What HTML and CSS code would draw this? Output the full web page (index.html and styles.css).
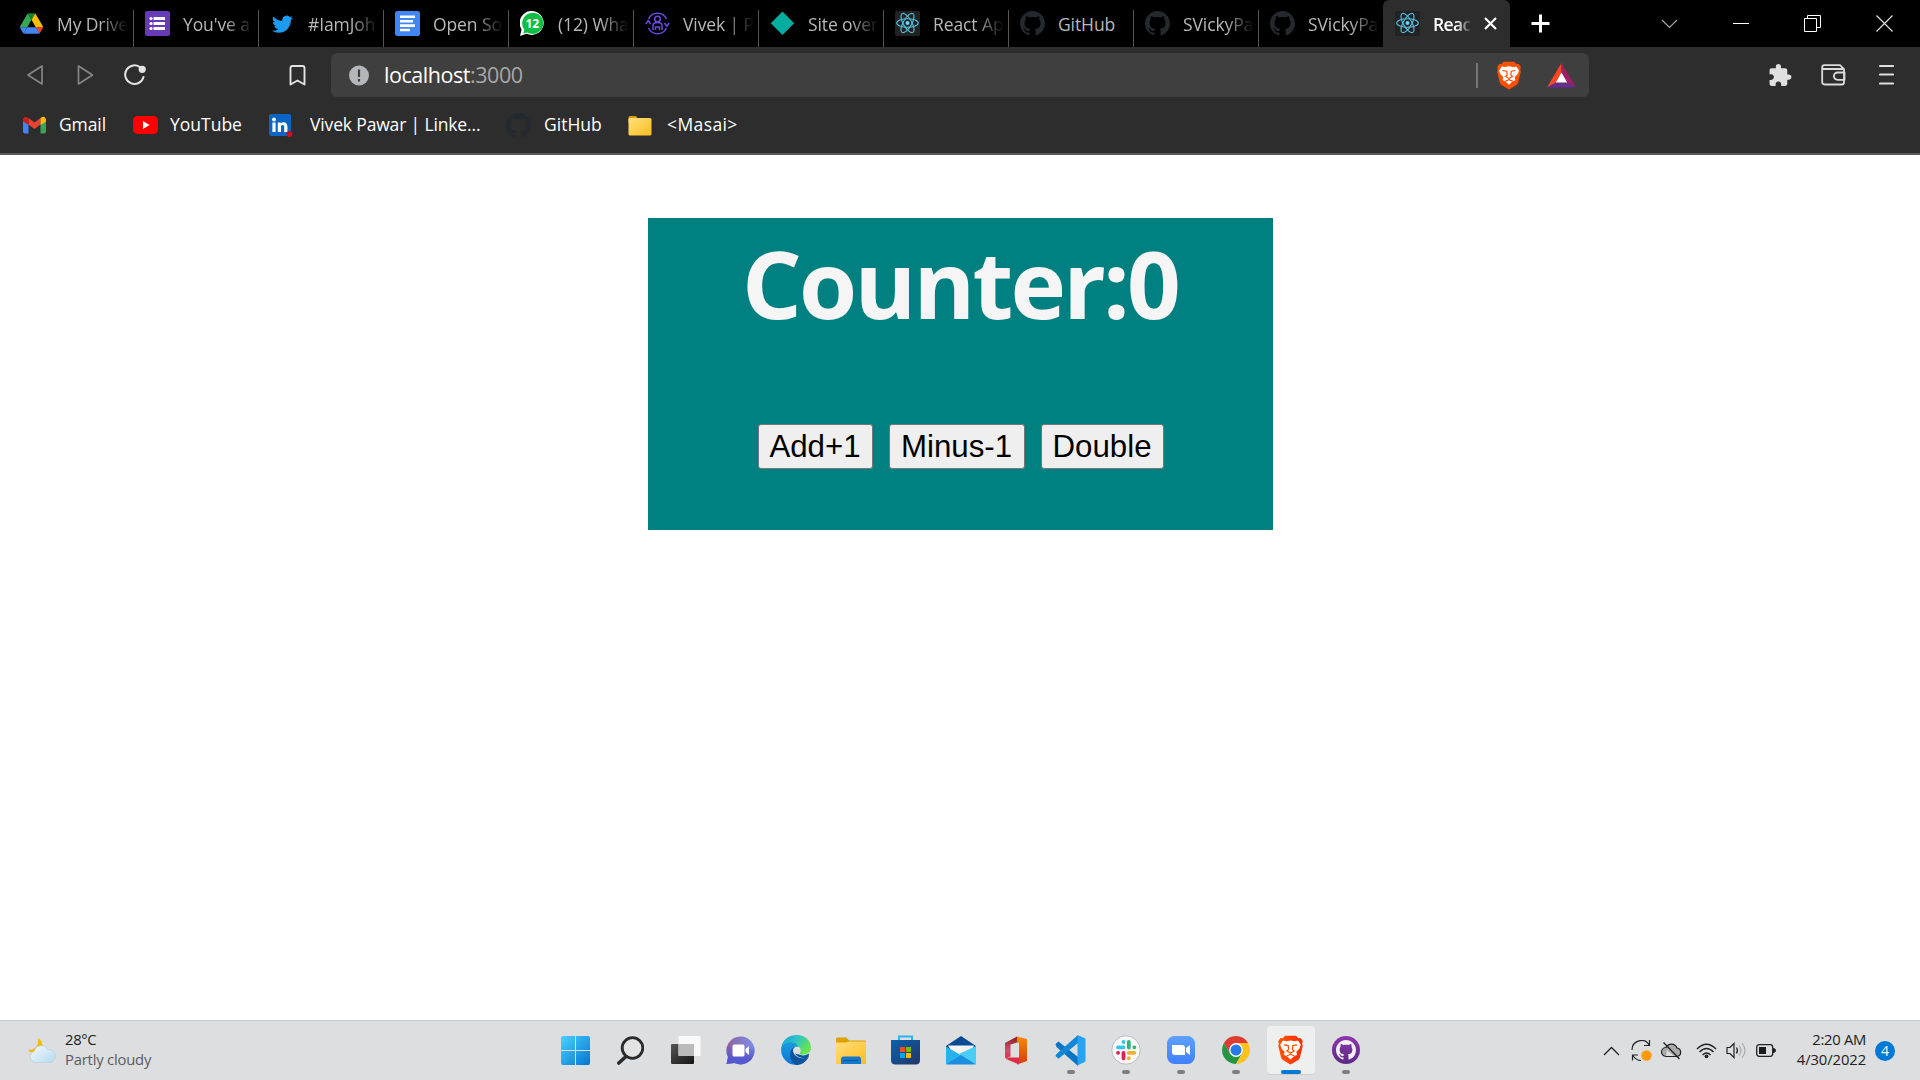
FILE: index.html
```html
<!DOCTYPE html>
<html lang="en">
<head>
<meta charset="utf-8">
<title>React App</title>
<link rel="stylesheet" href="styles.css">
</head>
<body>
<svg class="defs" width="0" height="0" aria-hidden="true">
  <defs>
    <linearGradient id="win" x1="0" y1="0" x2="1" y2="1"><stop offset="0" stop-color="#4fd0fb"/><stop offset="1" stop-color="#0077d3"/></linearGradient>
    <linearGradient id="chat" x1="0" y1="0" x2="1" y2="0"><stop offset="0" stop-color="#8d5f9f"/><stop offset="1" stop-color="#7d91ea"/></linearGradient>
    <linearGradient id="chat2" x1="0" y1="0" x2="0" y2="1"><stop offset=".3" stop-color="#5558cf" stop-opacity="0"/><stop offset=".8" stop-color="#5558cf"/></linearGradient>
    <linearGradient id="edge" x1="0" y1="0" x2="1" y2=".5"><stop offset="0" stop-color="#1a9de0"/><stop offset=".5" stop-color="#2dc3c6"/><stop offset="1" stop-color="#69e64e"/></linearGradient>
    <linearGradient id="edge2" x1="0" y1="0" x2="0" y2="1"><stop offset="0" stop-color="#1b9bdc"/><stop offset="1" stop-color="#0b76d6"/></linearGradient>
    <linearGradient id="fold" x1="0" y1="0" x2="1" y2="1"><stop offset="0" stop-color="#ffe07a"/><stop offset="1" stop-color="#fbbc22"/></linearGradient>
    <linearGradient id="store" x1="0" y1="0" x2="1" y2="1"><stop offset="0" stop-color="#0a62b0"/><stop offset="1" stop-color="#233565"/></linearGradient>
    <linearGradient id="office" x1="0" y1="0" x2="0" y2="1"><stop offset="0" stop-color="#8e1b16"/><stop offset=".6" stop-color="#c9536f"/><stop offset="1" stop-color="#e0304a"/></linearGradient>
    <linearGradient id="office2" x1="0" y1="0" x2="0" y2="1"><stop offset="0" stop-color="#f68b00"/><stop offset="1" stop-color="#d63b12"/></linearGradient>
    <linearGradient id="lion" x1="0" y1="0" x2="1" y2="0"><stop offset="0" stop-color="#ff5500"/><stop offset="1" stop-color="#ff2a00"/></linearGradient>
    <linearGradient id="cloud" x1="0" y1="0" x2="1" y2="1"><stop offset="0" stop-color="#f4f9fc"/><stop offset="1" stop-color="#b4d9f2"/></linearGradient>
    <linearGradient id="task" x1="0" y1="0" x2="1" y2="1"><stop offset="0" stop-color="#555"/><stop offset="1" stop-color="#151515"/></linearGradient>
    <linearGradient id="zoom" x1="0" y1="0" x2="0" y2="1"><stop offset="0" stop-color="#5ea0ff"/><stop offset="1" stop-color="#4080fb"/></linearGradient>
    <linearGradient id="ghd" x1="0" y1="0" x2="0" y2="1"><stop offset="0" stop-color="#8d35ad"/><stop offset="1" stop-color="#5c2a86"/></linearGradient>
  </defs>
  <symbol id="github" viewBox="0 0 16 16"><path d="M8 0C3.58 0 0 3.58 0 8c0 3.54 2.29 6.53 5.47 7.59.4.07.55-.17.55-.38 0-.19-.01-.82-.01-1.49-2.01.37-2.53-.49-2.69-.94-.09-.23-.48-.94-.82-1.13-.28-.15-.68-.52-.01-.53.63-.01 1.08.58 1.23.82.72 1.21 1.87.87 2.33.66.07-.52.28-.87.51-1.07-1.78-.2-3.64-.89-3.64-3.95 0-.87.31-1.59.82-2.15-.08-.2-.36-1.02.08-2.12 0 0 .67-.21 2.2.82.64-.18 1.32-.27 2-.27.68 0 1.36.09 2 .27 1.53-1.04 2.2-.82 2.2-.82.44 1.1.16 1.92.08 2.12.51.56.82 1.27.82 2.15 0 3.07-1.87 3.75-3.65 3.95.29.25.54.73.54 1.48 0 1.07-.01 1.93-.01 2.2 0 .21.15.46.55.38A8.013 8.013 0 0016 8c0-4.42-3.58-8-8-8z"/></symbol>
  <symbol id="react" viewBox="0 0 25 25"><rect width="25" height="25" rx="2" fill="#222"/><g fill="none" stroke="#53c1de" stroke-width="1.1"><ellipse cx="12.5" cy="12" rx="10.8" ry="4.2"/><ellipse cx="12.5" cy="12" rx="10.8" ry="4.2" transform="rotate(60 12.5 12)"/><ellipse cx="12.5" cy="12" rx="10.8" ry="4.2" transform="rotate(120 12.5 12)"/></g><circle cx="12.5" cy="12" r="2" fill="#61dafb"/></symbol>
  <symbol id="brave" viewBox="0 0 26 30"><path d="M7.5.8h11l2.2 2.4 2.3-.2 2.300 3.300-.7 2.200.6 2.500-2.700 11.200c-.3 1.200-.9 2-1.800 2.700L13 29.500l-7.700-4.600c-.9-.7-1.500-1.500-1.800-2.700L.8 11l.6-2.500-.7-2.200L3 3l2.300.2z"/><path d="M5.500 5.600 9 6.300l4-.9 4 .9 3.500-.7 2.800 4.200-1.300 3.600-3.200 3.300.9 3-3.700 2L13 24.600l-3-2.900-3.700-2 .9-3L4 13.400 2.700 9.800z" fill="#fff"/><path d="m6.300 9.800 4.400.8.400 4-1.800 1.400 3.700 2 3.700-2-1.800-1.400.4-4 4.400-.8M13 18v1.800M9 21l4-1.700 4 1.700" fill="none" stroke="#ff4a00" stroke-width="1.200"/></symbol>
</svg>

<header class="browser">
  <div class="tabstrip">
    <div class="tab drive"><span class="fav"><svg width="23" height="21" viewBox="0 0 87.3 78"><path fill="#4285f4" d="m6.600 66.850 3.850 6.650c.8 1.400 1.950 2.500 3.300 3.300l13.750-23.800h-27.500c0 1.550.4 3.100 1.200 4.500z"/><path fill="#34a853" d="m43.650 25-13.750-23.800c-1.350.8-2.500 1.900-3.300 3.300l-25.400 44a9.060 9.060 0 0 0-1.200 4.500h27.500z"/><path fill="#ea4335" d="m73.550 76.800c1.350-.8 2.500-1.900 3.300-3.300l1.600-2.750 7.650-13.250c.8-1.400 1.200-2.950 1.200-4.500h-27.502l5.852 11.500z"/><path fill="#188038" d="m43.650 25 13.750-23.800c-1.350-.8-2.900-1.200-4.500-1.200h-18.500c-1.600 0-3.150.45-4.500 1.200z"/><path fill="#4285f4" d="m59.800 53h-32.300l-13.750 23.800c1.350.8 2.900 1.200 4.500 1.200h50.800c1.600 0 3.150-.45 4.500-1.200z"/><path fill="#fbbc04" d="m73.400 26.500-12.700-22c-.8-1.400-1.950-2.500-3.300-3.300l-13.750 23.800 16.150 28h27.450c0-1.550-.4-3.100-1.200-4.500z"/></svg></span><span class="label">My Drive</span></div>
    <div class="tab"><span class="fav"><svg width="25" height="25"><rect width="25" height="25" rx="2" fill="#673ab7"/><g fill="#fff"><path d="M8.500 6h11.500v3H8.500zM8.500 11h11.500v3H8.500zM8.500 16h11.500v3H8.500z"/><circle cx="6" cy="7.500" r="1.600"/><circle cx="6" cy="12.500" r="1.600"/><circle cx="6" cy="17.500" r="1.600"/></g></svg></span><span class="label">You've a</span></div>
    <div class="tab"><span class="fav tw"><svg width="21" height="21" viewBox="0 0 16 16"><path fill="#1d9bf0" d="M5.026 15c6.038 0 9.341-5.003 9.341-9.334 0-.14 0-.282-.006-.422A6.685 6.685 0 0 0 16 3.542a6.658 6.658 0 0 1-1.889.518 3.301 3.301 0 0 0 1.447-1.817 6.533 6.533 0 0 1-2.087.793A3.286 3.286 0 0 0 7.875 6.030a9.325 9.325 0 0 1-6.767-3.429 3.289 3.289 0 0 0 1.018 4.382A3.323 3.323 0 0 1 .64 6.575v.045a3.288 3.288 0 0 0 2.632 3.218 3.203 3.203 0 0 1-.865.115 3.230 3.230 0 0 1-.614-.057 3.283 3.283 0 0 0 3.067 2.277A6.588 6.588 0 0 1 .78 13.580a6.320 6.320 0 0 1-.78-.045A9.344 9.344 0 0 0 5.026 15z"/></svg></span><span class="label">#IamJoh</span></div>
    <div class="tab"><span class="fav"><svg width="25" height="25"><rect width="25" height="25" rx="2.500" fill="#4285f4"/><path d="M5 4.500h15v2.600H5zM5 8.900h13v2.600H5zM5 13.300h15v2.600H5zM5 17.700h10v2.600H5z" fill="#fff"/></svg></span><span class="label">Open So</span></div>
    <div class="tab"><span class="fav"><svg width="25" height="25"><path d="M12.500 0a12 12 0 1 1-6 22.800L0 25l1.600-6.600A12 12 0 0 1 12.500 0z" fill="#fff"/><path d="M12.700 1.700a10.600 10.600 0 1 1-5.400 19.700l-4 1.200 1-4A10.600 10.600 0 0 1 12.700 1.700z" fill="#0fbf45"/><text x="12.300" y="16.900" text-anchor="middle" class="wa">12</text></svg></span><span class="label">(12) Wha</span></div>
    <div class="tab"><span class="fav"><svg width="25" height="25" fill="none" stroke="#6c47e8" stroke-width="1.500"><circle cx="12.500" cy="8" r="2.800"/><path d="M8 19v-4.500c0-4 9-4 9 0V19M10.500 19v-3h4v3M3.500 8A10 10 0 0 1 21.500 8M21.500 17a10 10 0 0 1-18 0M.8 13 3.200 9.500 5.500 13M19.500 12l2.400 3.300 2.300-3.300"/></svg></span><span class="label">Vivek | P</span></div>
    <div class="tab"><span class="fav"><svg width="25" height="25"><path d="m12.500.5 11.700 11.700-11.700 11.700L.8 12.200z" fill="#05ada0"/></svg></span><span class="label">Site over</span></div>
    <div class="tab"><span class="fav"><svg width="25" height="25"><use href="#react"/></svg></span><span class="label">React Ap</span></div>
    <div class="tab"><span class="fav"><svg width="25" height="25" fill="#24292f"><use href="#github"/></svg></span><span class="label plain">GitHub</span></div>
    <div class="tab"><span class="fav"><svg width="25" height="25" fill="#24292f"><use href="#github"/></svg></span><span class="label">SVickyPa</span></div>
    <div class="tab last"><span class="fav"><svg width="25" height="25" fill="#24292f"><use href="#github"/></svg></span><span class="label">SVickyPa</span></div>
    <div class="tab active"><span class="fav"><svg width="25" height="25"><use href="#react"/></svg></span><span class="label">Reac</span><svg class="tabclose" width="13" height="13"><path d="m1 1 11 11M12 1 1 12" stroke="#fff" stroke-width="2.200"/></svg></div>
    <div class="newtab"><svg width="19" height="19"><path d="M9.500.5v18M.5 9.500h18" stroke="#fff" stroke-width="3"/></svg></div>
    <div class="winctl">
      <span><svg width="17" height="10"><path d="m1 1 7.500 7.500L16 1" fill="none" stroke="#aaa" stroke-width="1.100"/></svg></span>
      <span><svg width="16" height="3"><path d="M0 1.500h16" stroke="#fff"/></svg></span>
      <span><svg width="17" height="17"><path d="M.5 3.500h12v13H.5zM3.500 3.500v-3h13v12h-4" fill="none" stroke="#fff"/></svg></span>
      <span><svg width="17" height="17"><path d="m.5.5 16 16M16.500.5l-16 16" stroke="#ddd" stroke-width="1.200"/></svg></span>
    </div>
  </div>

  <div class="toolbar">
    <div class="nav">
      <span><svg width="18" height="22"><path d="M16 2v18L2 11z" fill="none" stroke="#858585" stroke-width="1.700" stroke-linejoin="round"/></svg></span>
      <span><svg width="18" height="22"><path d="M2.500 2v18l14-9z" fill="none" stroke="#858585" stroke-width="1.700" stroke-linejoin="round"/></svg></span>
      <span><svg width="23" height="22"><path d="M16.700 3.700A9.300 9.300 0 1 0 19.500 13" fill="none" stroke="#e3e3e3" stroke-width="2" stroke-linecap="round"/><circle cx="18.200" cy="5.300" r="3.600" fill="#e3e3e3"/></svg></span>
    </div>
    <span class="mark"><svg width="17" height="21"><path d="M1.500 3q0-2 2-2h10q2 0 2 2v16.500l-7-4-7 4z" fill="none" stroke="#e3e3e3" stroke-width="1.900" stroke-linejoin="round"/></svg></span>
    <div class="address">
      <svg width="20" height="21"><circle cx="10" cy="10.500" r="10" fill="#b4b6ba"/><path d="M10 4.500v7.500M10 14v2.500" stroke="#3f3f3f" stroke-width="2.200"/></svg>
      <span class="url">localhost<span class="port">:3000</span></span>
      <i class="divider"></i>
      <svg class="shield" width="26" height="29" fill="#ff5000"><use href="#brave"/></svg>
      <svg class="bat" width="29" height="25"><path d="M14.500 0 0 24.500l9-5 5.500-10z" fill="#ff4724"/><path d="M14.500 0 29 24.500l-9-5-5.500-10z" fill="#9e1f63"/><path d="m0 24.500 9-5h11l9 5z" fill="#662d91"/><path d="m14.500 9.500 5.700 10H8.800z" fill="#fff"/></svg>
    </div>
    <div class="tools">
      <span><svg width="23" height="24" viewBox="1.500 0 22 23"><path fill="#e0e0e0" d="M20.500 11H19V7c0-1.100-.9-2-2-2h-4V3.500C13 2.120 11.880 1 10.500 1S8 2.120 8 3.500V5H4c-1.100 0-1.990.9-1.990 2v3.800H3.500c1.490 0 2.700 1.210 2.700 2.700s-1.210 2.700-2.700 2.700H2V20c0 1.100.9 2 2 2h3.800v-1.500c0-1.490 1.210-2.700 2.700-2.700 1.490 0 2.700 1.210 2.700 2.700V22H17c1.100 0 2-.9 2-2v-4h1.500c1.380 0 2.500-1.120 2.500-2.500S21.880 11 20.500 11z"/></svg></span>
      <span><svg width="25" height="22"><g fill="none" stroke="#dcdcdc" stroke-width="1.800" stroke-linejoin="round"><path d="M1.200 3.500q0-2.300 2.300-2.300h15.500l4 4v13q0 2.300-2.300 2.300h-17q-2.500 0-2.500-2.300zM1.500 5H22M23.500 8.500h-7a3.500 3.500 0 0 0 0 7.300h7z"/></g></svg></span>
      <span><svg width="15" height="22"><path d="M1 2h13M1 10.500h13M1 19.500h13" stroke="#dedede" stroke-width="2.200" stroke-linecap="round"/></svg></span>
    </div>
  </div>

  <nav class="bookmarks">
    <a class="bm gmail"><svg width="24" height="18"><path d="M0 3v12.500Q0 17.500 2 17.500h3.500V8z" fill="#4285f4"/><path d="M23 3v12.500q0 2-2 2h-3.500V8z" fill="#34a853"/><path d="M5.500 2v6.500l6 4.500 6-4.500V2l-6 4.500z" fill="#ea4335"/><path d="M0 3.500v2L5.500 9V2Q1-1 0 3.500z" fill="#c5221f"/><path d="M23 3.500v2L17.500 9V2Q22-1 23 3.500z" fill="#fbbc04"/></svg><span>Gmail</span></a>
    <a class="bm youtube"><svg width="25" height="18"><rect width="25" height="18" rx="4.500" fill="#f00"/><path d="m10 5 6.500 4-6.500 4z" fill="#fff"/></svg><span>YouTube</span></a>
    <a class="bm linkedin"><svg width="24" height="24"><rect y="1" width="22" height="22" rx="2" fill="#0a66c2"/><g fill="#fff"><circle cx="5" cy="6.500" r="1.900"/><path d="M3.400 9.500h3.200v9.500H3.400zM8.800 9.500h3v1.300c1.800-2.400 6.600-1.900 6.600 2.400V19h-3.200v-5.200c0-2.400-3.200-2.300-3.200 0V19H8.800z"/></g><circle cx="20.500" cy="21" r="3" fill="#cc1016"/></svg><span>Vivek Pawar | Linke...</span></a>
    <a class="bm gh"><svg width="25" height="25" fill="#24292f"><use href="#github"/></svg><span>GitHub</span></a>
    <a class="bm masai"><svg width="24" height="21"><path d="M.5 2.500Q.5 1 2 1h6l2 3v4H.5z" fill="#d99a0b"/><rect x=".5" y="3" width="23" height="17.500" rx="1.500" fill="url(#fold)"/></svg><span>&lt;Masai&gt;</span></a>
  </nav>
</header>

<main class="page">
  <section class="counter">
    <h1>Counter:0</h1>
    <div class="actions">
      <button class="add">Add+1</button>
      <button class="minus">Minus-1</button>
      <button class="double">Double</button>
    </div>
  </section>
</main>

<footer class="taskbar">
  <div class="weather">
    <svg width="30" height="27"><path d="M11 1c5 3 6 9 2 13-3 3-9 3-12-1C8 13 12 9 11 1z" fill="#fbb90d"/><path d="M8 25.500a6 6 0 0 1-.5-11.500 7 7 0 0 1 13-1.500 6.500 6.500 0 0 1 2.500 13z" fill="url(#cloud)" stroke="#a9c3d5" stroke-width=".4"/></svg>
    <div class="wtext"><span>28°C</span><span class="muted">Partly cloudy</span></div>
  </div>
  <div class="apps">
    <span class="app"><svg width="29" height="29"><path d="M2 0h12v14H0V2q0-2 2-2zM15 0h12q2 0 2 2v12H15zM0 15h14v14H2q-2 0-2-2zM15 15h14v12q0 2-2 2H15z" fill="url(#win)"/></svg></span>
    <span class="app"><svg width="27" height="29"><path d="M9.500 20 1.800 27" stroke="#2a2a2a" stroke-width="3.600" stroke-linecap="round"/><circle cx="15.500" cy="12" r="10.300" fill="#e3e3e3" stroke="#2a2a2a" stroke-width="2.800"/></svg></span>
    <span class="app"><svg width="30" height="29"><rect y="8" width="23" height="20" rx="1" fill="url(#task)"/><rect x="7.500" y="0" width="22" height="20" rx="1" fill="#fafafa" opacity=".95"/><path d="M7.500 8H23v12H7.500z" fill="#bbb"/></svg></span>
    <span class="app"><svg width="29" height="29"><path d="M14.500.5a14 14 0 1 1-6 26.600L.5 28l1.500-7A14 14 0 0 1 14.500.5z" fill="url(#chat)"/><path d="M14.500.5a14 14 0 1 1-6 26.600L.5 28l1.500-7A14 14 0 0 1 14.500.5z" fill="url(#chat2)"/><rect x="6.500" y="8.500" width="12" height="12" rx="1.500" fill="#fff"/><path d="m19.500 13 3.500-3v9l-3.500-3z" fill="#fff"/></svg></span>
    <span class="app"><svg width="30" height="30"><path d="M.3 13C2-4 29-4 30 12c.3 5-4 8.500-10.500 7.500-1.500-.5-1-1.500-.2-2.500 1.500-3-1-6-5.300-6z" fill="url(#edge)"/><path d="M.2 13C3 6 14 5 17.500 11.500c-3-.5-5.500 1.500-5.500 4.500l4 13.900C6 30.500-.8 22 .2 13z" fill="url(#edge2)"/><path d="M12.500 12C10 18 16 25.500 27.500 22.500c-3 5-7.500 7.500-12 7.500C9 28 6.500 17 12.500 12z" fill="#0f549f"/><path d="M12.500 15.500c.5-3 4-4 6-1.500 1.500 2-.5 4-.3 5.200.5 2 5.500 2 8.800 1l.5 2C18 25 12 20 12.500 15.500z" fill="#dcdedf"/><path d="M19 19.800c2.500 1.200 6 .8 9-1.300l-.5 4c-5 1.500-11 .5-13.500-4z" fill="#0f549f"/></svg></span>
    <span class="app"><svg width="30" height="27"><path d="M0 8V2Q0 .5 1.500.5h9l2.500 3h16q1 0 1 1V9H0z" fill="#dfa000"/><path d="M0 5.500h10l3-1h17V27H0z" fill="url(#fold)"/><path d="M5 27v-5q0-2.500 2.500-2.500h15q2.500 0 2.500 2.500v5z" fill="#1479cd"/><path d="M8 23.500h14" stroke="#07549b"/></svg></span>
    <span class="app"><svg width="29" height="30"><path d="M8 7V1.500h13V7" fill="none" stroke="#25b8f1" stroke-width="2"/><path d="M0 5h29v20q0 4.500-4.500 4.500h-20Q0 29.500 0 25z" fill="url(#store)"/><path d="M9 12h5v5H9z" fill="#f25022"/><path d="M15 12h5v5h-5z" fill="#7fba00"/><path d="M9 18h5v5H9z" fill="#00a4ef"/><path d="M15 18h5v5h-5z" fill="#ffb900"/></svg></span>
    <span class="app"><svg width="30" height="29"><path d="M0 10 15 0l15 10v4H0z" fill="#0a4b94"/><path d="M2 9.500h26l-4 9L9 21z" fill="#f3f3f3"/><path d="M0 10.500 30 28H0z" fill="#28b2ec"/><path d="M30 10v18.500L13 18z" fill="#4ccdf5"/><path d="M0 28.500h30L15 19z" fill="#1b8fdd"/></svg></span>
    <span class="app"><svg width="24" height="29"><path d="M1 7 13 .5v6L7 9v11l-5 3-1-2z" fill="url(#office)"/><path d="M13 .5 23 3v22l-10 3.500z" fill="url(#office2)"/><path d="m2 23 6-2.500h7v8z" fill="#dc2e45"/><path d="M6.500 8.500 15 6.500v15H6.500z" fill="#dedfe0"/></svg></span>
    <span class="app run"><svg width="31" height="31"><path d="m.5 9 3-2.500L23 22v9L1.500 12z" fill="#0b75c5"/><path d="m.5 21 3 2.800L23 8V0L1.500 19z" fill="#1188d6"/><path d="m22.500 0 8 3.500v23l-8 4z" fill="#27a3f3"/></svg></span>
    <span class="app run"><svg width="30" height="30"><circle cx="15" cy="15" r="14.200" fill="#f8f8f8" stroke="#bcbcbc"/><g fill="none" stroke-width="3.800" stroke-linecap="round"><path d="M12.500 6.800v.2M7 12.300h5.500" stroke="#36c5f0"/><path d="M17.800 7v5.500M23.300 12.300h.1" stroke="#2eb67d"/><path d="M17.800 17.800h5.500M17.800 23.200v.1" stroke="#ecb22e"/><path d="M12.500 17.800v5.500M7 17.800h.1" stroke="#e01e5a"/></g></svg></span>
    <span class="app run"><svg width="28" height="28"><rect width="28" height="28" rx="7.500" fill="url(#zoom)"/><path d="M5 9h10q3 0 3 3v7H8q-3 0-3-3zM19 12l4-3v10l-4-3z" fill="#fff"/></svg></span>
    <span class="app run"><svg width="28" height="28"><path d="M14 0A14 14 0 0 0 1.900 7L8 17.500 14 14V7h12.100A14 14 0 0 0 14 0z" fill="#df3c32"/><path d="M1.900 7A14 14 0 0 0 14 28l6-10.500L14 14l-6 3.500z" fill="#249543"/><path d="M14 7h12.100A14 14 0 0 1 14 28l6-10.500z" fill="#fcc31e"/><circle cx="14" cy="14" r="6.900" fill="#fff"/><circle cx="14" cy="14" r="5.500" fill="#267be8"/></svg></span>
    <span class="app run current"><svg width="27" height="30" viewBox="0 0 26 30" fill="url(#lion)"><use href="#brave"/></svg></span>
    <span class="app run"><svg width="28" height="28"><circle cx="14" cy="14" r="14" fill="url(#ghd)"/><svg x="4" y="4" width="20" height="20" fill="#f5f0f7"><use href="#github"/></svg></svg></span>
  </div>
  <div class="tray">
    <span class="t-up"><svg width="17" height="10"><path d="m1 9 7.500-7.500L16 9" fill="none" stroke="#222" stroke-width="1.300"/></svg></span>
    <span class="t-sync"><svg width="21" height="22"><g fill="none" stroke="#222" stroke-width="1.200"><path d="M1 10C1 0 14-3 18.500 5.500M18.500 0v5.500H13M10 20.500Q5 20.500 1.500 15M7 15H1.500v5.500"/></g><circle cx="15.500" cy="15.500" r="5.200" fill="#ff9a0c"/></svg></span>
    <span class="t-cloud"><svg width="21" height="18"><path d="M5 14.500a4.500 4.500 0 0 1 0-9 6 6 0 0 1 11 .5 4.300 4.300 0 0 1 0 8.500z" fill="#aaa" stroke="#222" stroke-width="1.200"/><path d="M6 8 13 14H5z" fill="#ddd"/><path d="m2.500.5 16 16.500" stroke="#222" stroke-width="1.300"/></svg></span>
    <span class="t-wifi"><svg width="21" height="16"><g fill="none" stroke="#222" stroke-width="1.400"><path d="M1 6q9.500-9.500 19 0M3.500 9q7-7 14 0M6.500 12q4-4 8 0"/></g><circle cx="10.500" cy="13.300" r="1.900" fill="#222"/></svg></span>
    <span class="t-vol"><svg width="21" height="17"><path d="M1 5.500h3l4-4v14l-4-4H1z" fill="none" stroke="#222" stroke-width="1.200"/><path d="M10.500 5.500q2 3 0 6" fill="none" stroke="#222" stroke-width="1.200"/><path d="M13 3.500q4 5 0 10M16 1q6 7.500 0 15" fill="none" stroke="#aaa" stroke-width="1.200"/></svg></span>
    <span class="t-bat"><svg width="20" height="13"><rect x=".7" y=".7" width="16" height="11.600" rx="2.500" fill="none" stroke="#222" stroke-width="1.300"/><path d="M3 3h7v7H3z" fill="#1b1b1b"/><path d="M17.500 4.500q2 0 2 2t-2 2z" fill="#222" stroke="#222"/></svg></span>
    <div class="clock"><span>2:20 AM</span><span class="date">4/30/2022</span></div>
    <span class="count">4</span>
  </div>
</footer>
</body>
</html>
```
FILE: styles.css
```css
* { box-sizing: border-box; }
body {
  margin: 0;
  width: 1920px;
  height: 1080px;
  display: flex;
  flex-direction: column;
  overflow: hidden;
  background: #fff;
  font-family: "Open Sans", "Noto Sans", sans-serif;
}
svg { display: block; flex: none; }
.defs { position: absolute; }

/* Browser chrome */
.browser {
  height: 155px;
  flex: none;
  background: #2d2d2d;
  border-bottom: 2px solid #595959;
}
.tabstrip {
  display: flex;
  height: 47px;
  padding-left: 9px;
  background: #000;
}
.tab {
  display: flex;
  align-items: center;
  width: 125px;
  height: 47px;
  flex: none;
  padding-left: 11px;
  background: linear-gradient(#555, #555) right 0 bottom 0 / 1px 37px no-repeat;
}
.tab.last { width: 124px; background: none; }
.tab.active {
  width: 127px;
  padding-left: 12px;
  background: #2d2d2d;
  border-radius: 6px 6px 0 0;
}
.fav {
  display: flex;
  justify-content: center;
  width: 25px;
  flex: none;
  margin-right: 13px;
}
.drive .fav { justify-content: flex-start; margin-right: 12px; }
.fav.tw { justify-content: flex-start; padding-left: 2px; }
.label {
  width: 71px;
  overflow: hidden;
  white-space: nowrap;
  font-size: 17.5px;
  line-height: 26px;
  letter-spacing: -.1px;
  color: #b8b8b8;
  -webkit-mask-image: linear-gradient(90deg, #000 60%, transparent);
  mask-image: linear-gradient(90deg, #000 60%, transparent);
}
.label.plain { -webkit-mask-image: none; mask-image: none; }
.active .label {
  width: 39px;
  color: #fff;
  font-weight: 600;
  letter-spacing: -.6px;
}
.tabclose { margin-left: 12px; }
.wa { font: 700 12px "Open Sans", sans-serif; fill: #fff; }
.newtab { display: flex; align-items: center; margin-left: 21px; }
.winctl { display: flex; margin-left: auto; }
.winctl span {
  display: flex;
  align-items: center;
  justify-content: center;
  width: 71.7px;
}

.toolbar { display: flex; align-items: center; height: 56px; padding-left: 10px; }
.nav { display: flex; }
.nav span { display: flex; justify-content: center; width: 50px; }
.mark { display: flex; justify-content: center; width: 40px; margin-left: 117px; }
.address {
  display: flex;
  align-items: center;
  width: 1258px;
  height: 44px;
  margin-left: 14px;
  padding-left: 18px;
  background: #3f3f3f;
  border-radius: 6px;
}
.url {
  flex: 1;
  margin-left: 15px;
  font-size: 21.5px;
  letter-spacing: -.45px;
  line-height: 30px;
  color: #fff;
}
.port { color: #a8a8a8; }
.divider { width: 2px; height: 25px; background: #757575; }
.shield { margin-left: 18px; }
.bat { margin-left: 25px; margin-right: 13px; }
.tools { display: flex; margin-left: 165px; }
.tools span {
  display: flex;
  align-items: center;
  justify-content: center;
  width: 53px;
}

.bookmarks { display: flex; align-items: center; height: 44px; padding-left: 23px; }
.bm {
  display: flex;
  align-items: center;
  flex: none;
  font-size: 17.5px;
  line-height: 24px;
  white-space: nowrap;
  color: #fff;
}
.bm span { padding-bottom: 2px; }
.gmail { width: 110px; gap: 12px; letter-spacing: -.1px; }
.youtube { width: 136px; gap: 12px; }
.linkedin { width: 237px; gap: 17px; letter-spacing: -.15px; }
.gh { width: 122px; gap: 13px; }
.masai { gap: 15px; letter-spacing: .4px; }

/* Page content */
.page { flex: 1; display: flex; justify-content: center; align-items: flex-start; padding-top: 63px; }
.counter {
  display: flex;
  flex-direction: column;
  align-items: center;
  width: 625px;
  height: 312px;
  background: #008080;
}
.counter h1 {
  margin: 0;
  padding-top: 3px;
  height: 206px;
  font-size: 94px;
  line-height: 124px;
  letter-spacing: -2.8px;
  font-weight: 700;
  color: #f5f5f5;
}
.actions { display: flex; gap: 16px; padding-left: 1px; }
.actions button {
  height: 45px;
  padding: 0;
  border: 1px solid #767676;
  border-radius: 3px;
  background: #efefef;
  color: #000;
  font: 31.25px "Liberation Sans", Arial, sans-serif;
}
.add { width: 115px; }
.minus { width: 136px; }
.double { width: 123px; }

/* Taskbar */
.taskbar {
  display: flex;
  height: 60px;
  flex: none;
  background: #dcdedf;
  border-top: 1px solid #c9c9c9;
}
.weather {
  display: flex;
  align-items: center;
  width: 548px;
  padding-left: 27px;
  gap: 8px;
}
.wtext, .clock {
  display: flex;
  flex-direction: column;
  padding-bottom: 3px;
  font-size: 14.8px;
  line-height: 20px;
  letter-spacing: -.3px;
  color: #222;
}
.wtext .muted { color: #5c5c5c; letter-spacing: -.2px; }
.clock .date { letter-spacing: -.1px; }
.apps { display: flex; }
.app {
  position: relative;
  display: flex;
  align-items: center;
  justify-content: center;
  width: 55px;
  height: 58px;
}
.app.run::after {
  content: "";
  position: absolute;
  left: 24px;
  top: 49px;
  width: 8px;
  height: 4px;
  border-radius: 2px;
  background: #7f7f7f;
}
.app.current::before {
  content: "";
  position: absolute;
  left: 4px;
  top: 5px;
  width: 48px;
  height: 48px;
  border-radius: 4px;
  background: #eeefef;
  border-bottom: 1px solid #ccc;
}
.app.current svg { position: relative; }
.app.current::after { left: 18px; width: 20px; background: #0078d4; }
.tray { display: flex; align-items: center; margin-left: 223px; flex: 1; }
.tray > span { display: flex; justify-content: center; flex: none; }
.t-up { width: 30px; }
.t-sync { width: 30px; }
.t-cloud { width: 30px; }
.t-wifi { width: 40px; }
.t-vol { width: 20px; }
.t-bat { width: 40px; }
.clock { width: 80px; align-items: flex-end; }
.tray > .count {
  align-items: center;
  width: 20px;
  height: 20px;
  margin-left: 9px;
  border-radius: 50%;
  background: #0078d4;
  color: #fff;
  font-size: 14px;
}
```
